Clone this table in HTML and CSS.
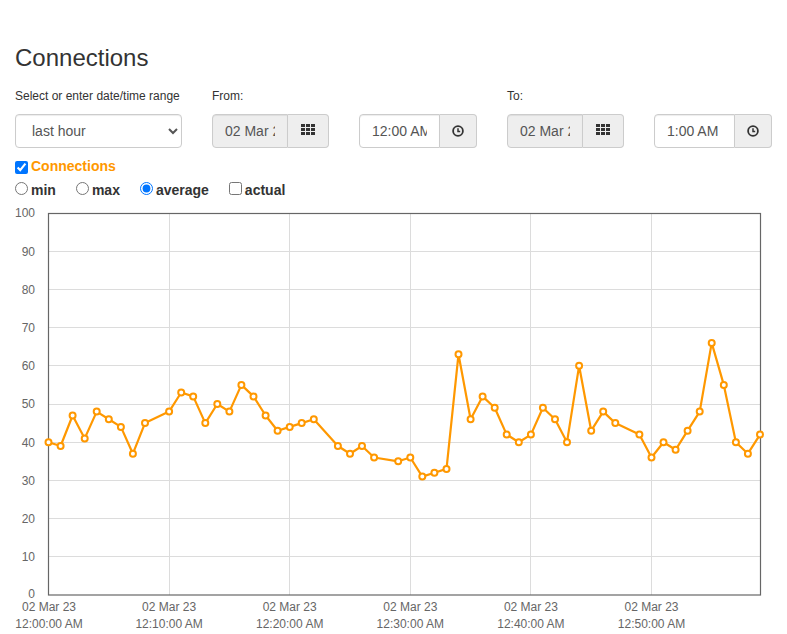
FILE: index.html
```html
<!DOCTYPE html>
<html>
<head>
<meta charset="utf-8">
<link rel="stylesheet" href="styles.css">
</head>
<body>
<div class="page">
  <div class="head">
    <h3 class="title">Connections</h3>
    <div class="filters">
      <label class="lbl c1">Select or enter date/time range</label>
      <label class="lbl c2">From:</label>
      <label class="lbl c4">To:</label>
      <select class="control sel r2">
        <option>last hour</option>
      </select>
      <div class="group r2">
        <input class="control gin dis dateinp" type="text" value="02 Mar 23" readonly>
        <span class="addon cal"><svg width="14" height="11" viewBox="0 0 14 11"><g fill="#333"><rect x="0" y="0" width="4" height="3"/><rect x="5" y="0" width="4" height="3"/><rect x="10" y="0" width="4" height="3"/><rect x="0" y="4" width="4" height="3"/><rect x="5" y="4" width="4" height="3"/><rect x="10" y="4" width="4" height="3"/><rect x="0" y="8" width="4" height="3"/><rect x="5" y="8" width="4" height="3"/><rect x="10" y="8" width="4" height="3"/></g></svg></span>
      </div>
      <div class="group r2">
        <input class="control gin timeinp" type="text" value="12:00 AM">
        <span class="addon clk"><svg width="12" height="12" viewBox="0 0 12 12"><circle cx="6" cy="6" r="4.9" fill="none" stroke="#333" stroke-width="1.8"/><path d="M6 3.2V6.4H8.2" fill="none" stroke="#333" stroke-width="1.5"/></svg></span>
      </div>
      <div class="group r2">
        <input class="control gin dis dateinp" type="text" value="02 Mar 23" readonly>
        <span class="addon cal"><svg width="14" height="11" viewBox="0 0 14 11"><g fill="#333"><rect x="0" y="0" width="4" height="3"/><rect x="5" y="0" width="4" height="3"/><rect x="10" y="0" width="4" height="3"/><rect x="0" y="4" width="4" height="3"/><rect x="5" y="4" width="4" height="3"/><rect x="10" y="4" width="4" height="3"/><rect x="0" y="8" width="4" height="3"/><rect x="5" y="8" width="4" height="3"/><rect x="10" y="8" width="4" height="3"/></g></svg></span>
      </div>
      <div class="group r2">
        <input class="control gin timeinp" type="text" value="1:00 AM">
        <span class="addon clk"><svg width="12" height="12" viewBox="0 0 12 12"><circle cx="6" cy="6" r="4.9" fill="none" stroke="#333" stroke-width="1.8"/><path d="M6 3.2V6.4H8.2" fill="none" stroke="#333" stroke-width="1.5"/></svg></span>
      </div>
    </div>
    <div class="opts">
      <div class="row"><label class="series"><input type="checkbox" class="chk1" checked>Connections</label></div>
      <div class="row r-agg">
        <label class="opt"><input type="radio" name="agg">min</label>
        <label class="opt"><input type="radio" name="agg">max</label>
        <label class="opt"><input type="radio" name="agg" checked>average</label>
        <label class="opt"><input type="checkbox">actual</label>
      </div>
    </div>
  </div>
  <svg class="chart" width="787" height="432" viewBox="0 202 787 432">
    <g class="grid" stroke="#dcdcdc" stroke-width="1" shape-rendering="crispEdges">
      <line x1="48.5" y1="251.2" x2="760.5" y2="251.2"/>
      <line x1="48.5" y1="289.4" x2="760.5" y2="289.4"/>
      <line x1="48.5" y1="327.6" x2="760.5" y2="327.6"/>
      <line x1="48.5" y1="365.8" x2="760.5" y2="365.8"/>
      <line x1="48.5" y1="404" x2="760.5" y2="404"/>
      <line x1="48.5" y1="442.2" x2="760.5" y2="442.2"/>
      <line x1="48.5" y1="480.4" x2="760.5" y2="480.4"/>
      <line x1="48.5" y1="518.6" x2="760.5" y2="518.6"/>
      <line x1="48.5" y1="556.8" x2="760.5" y2="556.8"/>
      <line x1="169.1" y1="213" x2="169.1" y2="595"/>
      <line x1="289.7" y1="213" x2="289.7" y2="595"/>
      <line x1="410.3" y1="213" x2="410.3" y2="595"/>
      <line x1="530.9" y1="213" x2="530.9" y2="595"/>
      <line x1="651.5" y1="213" x2="651.5" y2="595"/>
    </g>
    <rect x="48.5" y="213.5" width="712" height="381.5" fill="none" stroke="#666" stroke-width="1.2"/>
    <g class="ylab" text-anchor="end">
      <text x="35" y="217.3">100</text>
      <text x="35" y="255.5">90</text>
      <text x="35" y="293.7">80</text>
      <text x="35" y="331.9">70</text>
      <text x="35" y="370.1">60</text>
      <text x="35" y="408.3">50</text>
      <text x="35" y="446.5">40</text>
      <text x="35" y="484.7">30</text>
      <text x="35" y="522.9">20</text>
      <text x="35" y="561.1">10</text>
      <text x="35" y="597.5">0</text>
    </g>
    <g class="xlab" text-anchor="middle">
      <text x="49" y="611">02 Mar 23</text><text x="49" y="627.7">12:00:00 AM</text>
      <text x="169.1" y="611">02 Mar 23</text><text x="169.1" y="627.7">12:10:00 AM</text>
      <text x="289.7" y="611">02 Mar 23</text><text x="289.7" y="627.7">12:20:00 AM</text>
      <text x="410.3" y="611">02 Mar 23</text><text x="410.3" y="627.7">12:30:00 AM</text>
      <text x="530.9" y="611">02 Mar 23</text><text x="530.9" y="627.7">12:40:00 AM</text>
      <text x="651.5" y="611">02 Mar 23</text><text x="651.5" y="627.7">12:50:00 AM</text>
    </g>
    <polyline class="line" fill="none" stroke="#ff9800" stroke-width="2.2" stroke-linejoin="round" points="48.5,442.2 60.6,446.0 72.6,415.5 84.7,438.4 96.7,411.6 108.8,419.3 120.9,426.9 132.9,453.7 145.0,423.1 169.1,411.6 181.2,392.5 193.2,396.4 205.3,423.1 217.3,404.0 229.4,411.6 241.4,384.9 253.5,396.4 265.6,415.5 277.6,430.7 289.7,426.9 301.7,423.1 313.8,419.3 337.9,446.0 350.0,453.7 362.0,446.0 374.1,457.5 398.2,461.3 410.3,457.5 422.3,476.6 434.4,472.8 446.5,468.9 458.5,354.3 470.6,419.3 482.6,396.4 494.7,407.8 506.7,434.6 518.8,442.2 530.9,434.6 542.9,407.8 555.0,419.3 567.0,442.2 579.1,365.8 591.2,430.7 603.2,411.6 615.3,423.1 639.4,434.6 651.5,457.5 663.5,442.2 675.6,449.8 687.6,430.7 699.7,411.6 711.7,342.9 723.8,384.9 735.9,442.2 747.9,453.7 760.0,434.6"/>
    <g class="pts" fill="#fff" stroke="#ff9800" stroke-width="2">
      <circle cx="48.5" cy="442.2" r="3"/><circle cx="60.6" cy="446.0" r="3"/><circle cx="72.6" cy="415.5" r="3"/><circle cx="84.7" cy="438.4" r="3"/><circle cx="96.7" cy="411.6" r="3"/><circle cx="108.8" cy="419.3" r="3"/><circle cx="120.9" cy="426.9" r="3"/><circle cx="132.9" cy="453.7" r="3"/><circle cx="145.0" cy="423.1" r="3"/><circle cx="169.1" cy="411.6" r="3"/><circle cx="181.2" cy="392.5" r="3"/><circle cx="193.2" cy="396.4" r="3"/><circle cx="205.3" cy="423.1" r="3"/><circle cx="217.3" cy="404.0" r="3"/><circle cx="229.4" cy="411.6" r="3"/><circle cx="241.4" cy="384.9" r="3"/><circle cx="253.5" cy="396.4" r="3"/><circle cx="265.6" cy="415.5" r="3"/><circle cx="277.6" cy="430.7" r="3"/><circle cx="289.7" cy="426.9" r="3"/><circle cx="301.7" cy="423.1" r="3"/><circle cx="313.8" cy="419.3" r="3"/><circle cx="337.9" cy="446.0" r="3"/><circle cx="350.0" cy="453.7" r="3"/><circle cx="362.0" cy="446.0" r="3"/><circle cx="374.1" cy="457.5" r="3"/><circle cx="398.2" cy="461.3" r="3"/><circle cx="410.3" cy="457.5" r="3"/><circle cx="422.3" cy="476.6" r="3"/><circle cx="434.4" cy="472.8" r="3"/><circle cx="446.5" cy="468.9" r="3"/><circle cx="458.5" cy="354.3" r="3"/><circle cx="470.6" cy="419.3" r="3"/><circle cx="482.6" cy="396.4" r="3"/><circle cx="494.7" cy="407.8" r="3"/><circle cx="506.7" cy="434.6" r="3"/><circle cx="518.8" cy="442.2" r="3"/><circle cx="530.9" cy="434.6" r="3"/><circle cx="542.9" cy="407.8" r="3"/><circle cx="555.0" cy="419.3" r="3"/><circle cx="567.0" cy="442.2" r="3"/><circle cx="579.1" cy="365.8" r="3"/><circle cx="591.2" cy="430.7" r="3"/><circle cx="603.2" cy="411.6" r="3"/><circle cx="615.3" cy="423.1" r="3"/><circle cx="639.4" cy="434.6" r="3"/><circle cx="651.5" cy="457.5" r="3"/><circle cx="663.5" cy="442.2" r="3"/><circle cx="675.6" cy="449.8" r="3"/><circle cx="687.6" cy="430.7" r="3"/><circle cx="699.7" cy="411.6" r="3"/><circle cx="711.7" cy="342.9" r="3"/><circle cx="723.8" cy="384.9" r="3"/><circle cx="735.9" cy="442.2" r="3"/><circle cx="747.9" cy="453.7" r="3"/><circle cx="760.0" cy="434.6" r="3"/>
    </g>
  </svg>
</div>
</body>
</html>
```

FILE: styles.css
```css
html, body {
  margin: 0;
  padding: 0;
  background: #fff;
}
body {
  font-family: "Liberation Sans", Arial, Helvetica, sans-serif;
  font-size: 14px;
  line-height: 1.42857;
  color: #333;
}
.page {
  width: 787px;
  padding-top: 45px;
}
.head {
  padding: 0 15px;
}
.title {
  margin: 0;
  font-size: 24px;
  font-weight: 500;
  line-height: 26px;
  color: #333;
}
.filters {
  margin-top: 17px;
  display: grid;
  grid-template-columns: 167px 117px 118px 117px 118px;
  grid-template-rows: 17px 34px;
  column-gap: 30px;
  row-gap: 9px;
}
.lbl {
  font-size: 12px;
  line-height: 17px;
  font-weight: 400;
  white-space: nowrap;
  grid-row: 1;
}
.c1 { grid-column: 1; }
.c2 { grid-column: 2; }
.c4 { grid-column: 4; }
.r2 { grid-row: 2; }
.control {
  box-sizing: border-box;
  height: 34px;
  border: 1px solid #ccc;
  border-radius: 4px;
  font-family: "Liberation Sans", Arial, sans-serif;
  font-size: 14px;
  color: #555;
  background: #fff;
  box-shadow: inset 0 1px 1px rgba(0,0,0,.075);
}
.sel {
  width: 167px;
  padding: 6px 8px 6px 12px;
}
.group {
  display: flex;
  height: 34px;
}
.gin {
  flex: 1 1 auto;
  min-width: 0;
  width: 10px;
  padding: 6px 12px;
  border-radius: 4px 0 0 4px;
  outline: none;
}
.dis {
  background: #eee;
}
.addon {
  box-sizing: border-box;
  flex: 0 0 auto;
  height: 34px;
  display: flex;
  align-items: center;
  justify-content: center;
  background: #eee;
  border: 1px solid #ccc;
  border-left: none;
  border-radius: 0 4px 4px 0;
}
.cal { width: 41px; padding-bottom: 3px; }
.clk { width: 37px; }
.opts {
  margin-top: 6px;
}
.row {
  line-height: 24px;
  height: 24px;
  white-space: nowrap;
}
.r-agg {
  display: flex;
  align-items: baseline;
}
.series {
  font-weight: 700;
  color: #ff9800;
}
.chk1 {
  width: 13px;
  height: 13px;
  margin: 0 3px 0 0;
  vertical-align: -3px;
}
.opt {
  font-weight: 700;
  margin-right: 20px;
}
.opt input {
  width: 13px;
  height: 13px;
  margin: 0 3px 0 0;
  vertical-align: baseline;
}
.chart {
  display: block;
}
.ylab text, .xlab text {
  font-family: "Liberation Sans", Arial, sans-serif;
  font-size: 12px;
  fill: #666;
}
```
